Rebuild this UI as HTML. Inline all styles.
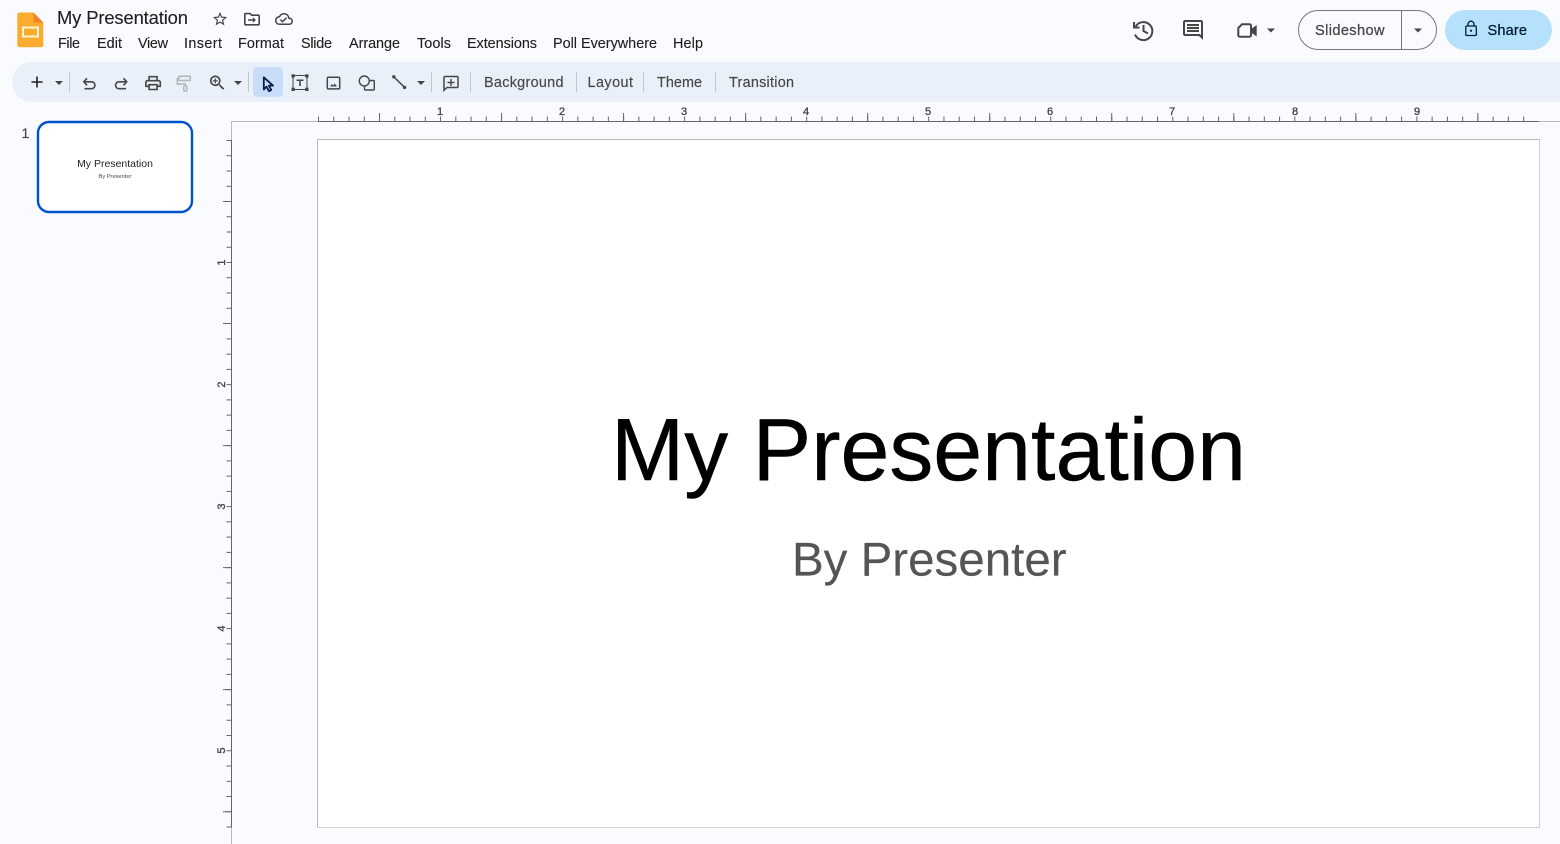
<!DOCTYPE html>
<html lang="en">
<head>
<meta charset="utf-8">
<title>My Presentation</title>
<style>
html,body{margin:0;padding:0;width:1560px;height:844px;overflow:hidden;background:#f9fbfe}
svg{display:block}
text{font-family:"Liberation Sans",Arial,sans-serif}
.m{font-size:14.4px;fill:#1f1f1f;stroke:#1f1f1f;stroke-width:.12}
.t{font-size:14.4px;fill:#444746;stroke:#444746;stroke-width:.15}
.r{font-size:11px;fill:#444746;stroke:#444746;stroke-width:.35;text-anchor:middle}
.i{fill:#444746}
.s{fill:none;stroke:#444746;stroke-width:1.6}
</style>
</head>
<body>
<svg width="1560" height="844" viewBox="0 0 1560 844" xmlns="http://www.w3.org/2000/svg">
<rect width="1560" height="844" fill="#f9fbfe"/>

<!-- logo -->
<path d="M19.500 12.500H33.500L43.300 22.500V45a2.300 2.300 0 0 1-2.300 2.300H19.600A2.300 2.300 0 0 1 17.300 45V14.700a2.200 2.200 0 0 1 2.200-2.200z" fill="#fbab2d"/>
<path d="M33.500 12.500L43.300 22.500H35.500a2 2 0 0 1-2-2z" fill="#f0862a"/>
<rect x="23" y="27.500" width="15" height="9" fill="none" stroke="#fff3d9" stroke-width="2"/>

<!-- title + menu -->
<text x="57" y="24" font-size="18.400" fill="#1f1f1f" stroke="#1f1f1f" stroke-width=".12" textLength="131" lengthAdjust="spacing">My Presentation</text>
<text class="m" x="58" y="48" textLength="22" lengthAdjust="spacing">File</text>
<text class="m" x="97" y="48" textLength="25" lengthAdjust="spacing">Edit</text>
<text class="m" x="138" y="48" textLength="30" lengthAdjust="spacing">View</text>
<text class="m" x="184" y="48" textLength="38" lengthAdjust="spacing">Insert</text>
<text class="m" x="238" y="48" textLength="46" lengthAdjust="spacing">Format</text>
<text class="m" x="301" y="48" textLength="31" lengthAdjust="spacing">Slide</text>
<text class="m" x="349" y="48" textLength="51" lengthAdjust="spacing">Arrange</text>
<text class="m" x="417" y="48" textLength="34" lengthAdjust="spacing">Tools</text>
<text class="m" x="467" y="48" textLength="70" lengthAdjust="spacing">Extensions</text>
<text class="m" x="553" y="48" textLength="104" lengthAdjust="spacing">Poll Everywhere</text>
<text class="m" x="673" y="48" textLength="30" lengthAdjust="spacing">Help</text>

<!-- star / folder / cloud -->
<g transform="translate(211.500 10.500) scale(.71)"><path class="i" d="M22 9.240l-7.190-.62L12 2 9.190 8.630 2 9.240l5.460 4.730L5.820 21 12 17.270 18.180 21l-1.630-7.030L22 9.240zM12 15.400l-3.760 2.270 1-4.280-3.320-2.880 4.380-.38L12 6.100l1.710 4.040 4.380.38-3.320 2.880 1 4.280L12 15.400z"/></g>
<g transform="translate(242.400 9.600) scale(.8)"><path class="i" d="M20 6h-8l-2-2H4c-1.100 0-2 .9-2 2v12c0 1.100.9 2 2 2h16c1.100 0 2-.9 2-2V8c0-1.100-.9-2-2-2zm0 12H4V6h5.170l2 2H20v10z"/><path class="i" d="M7 12h6V9.500l4 3.500-4 3.500V14H7z"/></g>
<g transform="translate(275 10) scale(.75)"><path class="i" d="M19.350 10.040C18.670 6.590 15.640 4 12 4 9.110 4 6.600 5.640 5.350 8.040 2.340 8.360 0 10.910 0 14c0 3.310 2.690 6 6 6h13c2.760 0 5-2.240 5-5 0-2.640-2.050-4.780-4.650-4.960zM19 18H6c-2.210 0-4-1.790-4-4 0-2.050 1.530-3.760 3.560-3.970l1.070-.11.5-.95C8.080 7.140 9.940 6 12 6c2.620 0 4.880 1.860 5.390 4.430l.3 1.500 1.530.11c1.560.1 2.780 1.410 2.780 2.960 0 1.650-1.350 3-3 3zm-9-3.820l-2.090-2.090L6.500 13.500 10 17l6.010-6.010-1.410-1.410z"/></g>

<!-- right header icons -->
<g fill="none" stroke="#444746" stroke-width="2"><path d="M1135.600 26.500A9 9 0 1 1 1135 34.500"/><path d="M1134 22v5.500h5.500"/><path d="M1143.500 25v6l4.500 2.500"/></g>
<g transform="translate(1181 18)"><path class="i" d="M21.990 4c0-1.100-.89-2-1.990-2H4c-1.100 0-2 .9-2 2v12c0 1.100.9 2 2 2h14l4 4-.01-18zM20 4v13.170L18.830 16H4V4h16zM6 12h12v2H6zm0-3h12v2H6zm0-3h12v2H6z"/></g>
<path d="M1242 24.300H1249.500a1.500 1.500 0 0 1 1.500 1.500V35.200a1.500 1.500 0 0 1-1.500 1.500H1239.800a1.500 1.500 0 0 1-1.500-1.500V28z" fill="none" stroke="#444746" stroke-width="2"/>
<path class="i" d="M1251 29L1256.700 25V36.500L1251 32.500z"/>
<path class="i" d="M1267 28.500h8l-4 4z"/>

<!-- slideshow -->
<rect x="1298.500" y="10.500" width="138" height="39" rx="19.500" fill="none" stroke="#747775"/>
<rect x="1401" y="10" width="1" height="40" fill="#747775"/>
<text x="1315" y="35" font-size="14.600" fill="#444746" stroke="#444746" stroke-width=".25" textLength="69.500" lengthAdjust="spacing">Slideshow</text>
<path class="i" d="M1414 28.500h8l-4 4z"/>

<!-- share -->
<rect x="1445" y="10" width="107" height="40" rx="20" fill="#b5e1fc"/>
<rect x="1465.800" y="26" width="10.500" height="9.500" rx="1" fill="none" stroke="#001d35" stroke-width="1.300"/>
<path d="M1468 26v-1.800a3 3 0 0 1 6 0V26" fill="none" stroke="#001d35" stroke-width="1.300"/>
<circle cx="1471" cy="30.700" r="1.100" fill="#001d35"/>
<text x="1487.500" y="35" font-size="14.600" fill="#001d35" stroke="#001d35" stroke-width=".25" textLength="39.500" lengthAdjust="spacing">Share</text>

<!-- toolbar -->
<path d="M32 62H1560V102H32a20 20 0 0 1 0-40z" fill="#e9f0f9"/>
<g transform="translate(27.500 72.500) scale(.79)"><path fill="#1f1f1f" d="M19 13h-6v6h-2v-6H5v-2h6V5h2v6h6v2z"/></g>
<path class="i" d="M55 81h8l-4 4z"/>
<rect x="69" y="72" width="1" height="20" fill="#c4c7c5"/>
<path class="s" d="M87 78.300L83.800 81.800 87 85.300M84 81.800H91.500a3.400 3.400 0 0 1 0 6.900H84.500"/>
<path class="s" d="M123.500 78.300L126.700 81.800 123.500 85.300M126.500 81.800H119a3.400 3.400 0 0 0 0 6.900H126"/>
<g transform="translate(143.500 73.500) scale(.8)"><path class="i" d="M19 8h-1V3H6v5H5c-1.660 0-3 1.340-3 3v6h4v4h12v-4h4v-6c0-1.660-1.340-3-3-3zM8 5h8v3H8V5zm8 12v2H8v-4h8v2zm2-2v-2H6v2H4v-4c0-.55.45-1 1-1h14c.55 0 1 .45 1 1v4h-2z"/></g>
<g fill="none" stroke="#b4b8bb" stroke-width="1.500"><rect x="178.800" y="76.300" width="11.500" height="4.200" rx=".8"/><path d="M178.300 78.500H177.300V84H185.300V86"/><rect x="183.800" y="86" width="3" height="5" rx=".8"/></g>
<g transform="translate(207.500 73) scale(.82)"><path class="i" d="M15.500 14h-.79l-.28-.27A6.471 6.471 0 0 0 16 9.500 6.500 6.500 0 1 0 9.500 16c1.610 0 3.090-.59 4.230-1.570l.27.28v.79l5 4.990L20.490 19l-4.990-5zm-6 0C7.010 14 5 11.990 5 9.500S7.010 5 9.500 5 14 7.010 14 9.500 11.990 14 9.500 14z"/><path class="i" d="M12.500 10.300h-2.300v2.300H8.800v-2.300H6.500V8.800h2.300V6.500h1.400v2.300h2.300z"/></g>
<path class="i" d="M234 81h8l-4 4z"/>
<rect x="248" y="72" width="1" height="20" fill="#c4c7c5"/>

<rect x="253" y="67" width="30" height="30" rx="4" fill="#c9ddf8"/>
<path d="M263.800 77.300L273 85.600H268.700L271.300 90 269 91.200 266.400 86.700 263.800 89.500z" fill="#c9ddf8" stroke="#041e49" stroke-width="1.800" stroke-linejoin="round"/>

<rect x="293" y="75.500" width="14" height="14" fill="none" stroke="#444746" stroke-width="1"/>
<g fill="#444746"><rect x="291.500" y="74.300" width="3.300" height="3.300"/><rect x="305.200" y="74.300" width="3.300" height="3.300"/><rect x="291.500" y="87.700" width="3.300" height="3.300"/><rect x="305.200" y="87.700" width="3.300" height="3.300"/><path d="M296.500 79.500H303.500V81H300.800V86H299.200V81H296.500z"/></g>

<rect x="327.300" y="77.300" width="12.400" height="11.600" rx="1.200" fill="none" stroke="#444746" stroke-width="1.500"/>
<path class="i" d="M330 86.500L332 84 333.300 85.500 334.800 83.500 337 86.500z"/>

<circle cx="364.300" cy="81" r="5" fill="none" stroke="#444746" stroke-width="1.400"/>
<path d="M369.800 80.500H373.300a1 1 0 0 1 1 1V89a1 1 0 0 1-1 1H365.500a1 1 0 0 1-1-1V86.600" fill="none" stroke="#444746" stroke-width="1.400"/>

<path d="M394 77L404.500 87.300" stroke="#444746" stroke-width="1.500"/>
<circle cx="393.800" cy="76.800" r="1.700" fill="#444746"/><circle cx="404.600" cy="87.400" r="1.700" fill="#444746"/>
<path class="i" d="M417 81h8l-4 4z"/>
<rect x="431" y="72" width="1" height="20" fill="#c4c7c5"/>

<path d="M445 76.500H457a1 1 0 0 1 1 1V86.500a1 1 0 0 1-1 1H447L444 90.300V77.500a1 1 0 0 1 1-1z" fill="none" stroke="#444746" stroke-width="1.500"/>
<path class="i" d="M450.300 79h1.400v2.800h2.800v1.400h-2.800V86h-1.400v-2.800h-2.800v-1.400h2.800z"/>
<rect x="470" y="72" width="1" height="20" fill="#c4c7c5"/>

<text class="t" x="484" y="87" textLength="79.500" lengthAdjust="spacing">Background</text>
<rect x="576" y="72" width="1" height="20" fill="#c4c7c5"/>
<text class="t" x="587.500" y="87" textLength="45.500" lengthAdjust="spacing">Layout</text>
<rect x="643" y="72" width="1" height="20" fill="#c4c7c5"/>
<text class="t" x="657" y="87" textLength="45" lengthAdjust="spacing">Theme</text>
<rect x="715" y="72" width="1" height="20" fill="#c4c7c5"/>
<text class="t" x="729" y="87" textLength="65" lengthAdjust="spacing">Transition</text>

<!-- filmstrip -->
<text x="21.500" y="138" font-size="14" fill="#444746" stroke="#444746" stroke-width=".2">1</text>
<rect x="38" y="122" width="154" height="90" rx="11" fill="#fff" stroke="#0052cc" stroke-width="2.400"/>
<text x="115" y="167" font-size="10.500" fill="#1f1f1f" text-anchor="middle">My Presentation</text>
<text x="115" y="178" font-size="5.700" fill="#666" stroke="#666" stroke-width=".1" text-anchor="middle">By Presenter</text>

<!-- rulers -->
<path d="M231.500 121.500H1560M231.500 121V844" fill="none" stroke="#b9bbbd"/>
<path d="M318 121.500H1539M231.500 140V827.500" fill="none" stroke="#666"/>
<line x1="318" y1="119" x2="1530" y2="119" stroke="#666" stroke-width="5" stroke-dasharray="1 14.255"/>
<line x1="379" y1="117" x2="1530" y2="117" stroke="#666" stroke-width="8" stroke-dasharray="1 121.040"/>
<line x1="229" y1="140" x2="229" y2="828" stroke="#666" stroke-width="5" stroke-dasharray="1 14.255"/>
<line x1="227" y1="201" x2="227" y2="828" stroke="#666" stroke-width="8" stroke-dasharray="1 121.040"/>
<text class="r" x="440" y="115">1</text>
<text class="r" x="562" y="115">2</text>
<text class="r" x="684" y="115">3</text>
<text class="r" x="806" y="115">4</text>
<text class="r" x="928" y="115">5</text>
<text class="r" x="1050" y="115">6</text>
<text class="r" x="1172" y="115">7</text>
<text class="r" x="1295" y="115">8</text>
<text class="r" x="1417" y="115">9</text>
<text class="r" x="225" y="262.500" transform="rotate(-90 225 262.500)">1</text>
<text class="r" x="225" y="384.500" transform="rotate(-90 225 384.500)">2</text>
<text class="r" x="225" y="506.500" transform="rotate(-90 225 506.500)">3</text>
<text class="r" x="225" y="628.500" transform="rotate(-90 225 628.500)">4</text>
<text class="r" x="225" y="750.500" transform="rotate(-90 225 750.500)">5</text>

<!-- slide -->
<rect x="318" y="140" width="1221" height="687" fill="#fff"/>
<path d="M317.500 827.500V139.500H1539.500" fill="none" stroke="#b9bbbd"/>
<path d="M1539.500 139.500V827.500H317.500" fill="none" stroke="#cfd1d3"/>
<text x="611" y="480" font-size="87.900" fill="#000" stroke="#000" stroke-width=".4">My Presentation</text>
<text x="792" y="575.700" font-size="47.500" fill="#555" stroke="#555" stroke-width=".15">By Presenter</text>
</svg>
</body>
</html>
